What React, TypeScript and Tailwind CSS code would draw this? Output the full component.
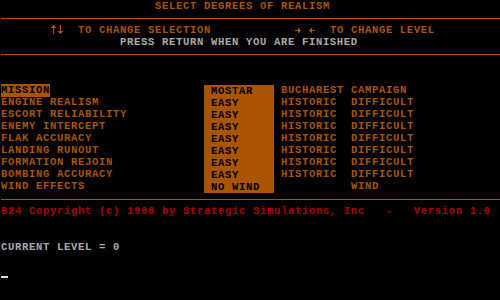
import React from "react";

const rows = [
  ["ENGINE REALISM", "EASY", "HISTORIC  DIFFICULT"],
  ["ESCORT RELIABILITY", "EASY", "HISTORIC  DIFFICULT"],
  ["ENEMY INTERCEPT", "EASY", "HISTORIC  DIFFICULT"],
  ["FLAK ACCURACY", "EASY", "HISTORIC  DIFFICULT"],
  ["LANDING RUNOUT", "EASY", "HISTORIC  DIFFICULT"],
  ["FORMATION REJOIN", "EASY", "HISTORIC  DIFFICULT"],
  ["BOMBING ACCURACY", "EASY", "HISTORIC  DIFFICULT"],
  ["WIND EFFECTS", "NO WIND", "          WIND"],
];

function Rule() {
  return (
    <div className="h-[12px] flex items-center">
      <div className="h-px w-full bg-[#a85400]" />
    </div>
  );
}

function Line({ children, className = "" }: { children?: React.ReactNode; className?: string }) {
  return <div className={"h-[12px] pt-px leading-[11px] whitespace-pre " + className}>{children}</div>;
}

// pixel arrows, one 7x12 cell each
const arrowRects: Record<string, number[][]> = {
  up: [[3, 0, 1, 9], [2, 1, 3, 1], [1, 2, 5, 1]],
  down: [[3, 0, 1, 9], [2, 7, 3, 1], [1, 6, 5, 1]],
  right: [[0, 5, 6, 1], [4, 4, 1, 3], [3, 3, 1, 5]],
  left: [[0, 5, 6, 1], [1, 4, 1, 3], [2, 3, 1, 5]],
};

function Arrow({ dir }: { dir: string }) {
  return (
    <svg width="7" height="11" viewBox="0 0 7 11" className="inline-block align-top" shapeRendering="crispEdges">
      {arrowRects[dir].map(([x, y, w, h], i) => (
        <rect key={i} x={x} y={y} width={w} height={h} fill="#a85400" />
      ))}
    </svg>
  );
}

export default function App() {
  return (
    <div
      className="w-[500px] h-[300px] bg-black text-[#a85400] font-bold text-[10.6px] tracking-[0.64px] overflow-hidden pl-px"
      style={{ fontFamily: '"Liberation Mono", "DejaVu Sans Mono", monospace' }}
    >
      <Line>{"                      SELECT DEGREES OF REALISM"}</Line>
      <Rule />
      <Line>
        {"       "}
        <Arrow dir="up" />
        <Arrow dir="down" />
        {"  TO CHANGE SELECTION            "}
        <Arrow dir="right" />
        {" "}
        <Arrow dir="left" />
        {"  TO CHANGE LEVEL"}
      </Line>
      <Line className="text-[#aaaaaa]">{"                 PRESS RETURN WHEN YOU ARE FINISHED"}</Line>
      <Rule />
      <Line />
      <Line />

      {/* options table */}
      <div className="flex">
        <div className="w-[203px]">
          <Line>
            <span className="bg-[#a85400] text-black border-b border-[#a85400]">MISSION</span>
          </Line>
          {rows.map((r) => (
            <Line key={r[0]}>{r[0]}</Line>
          ))}
        </div>
        <div className="w-[70px] bg-[#a85400] text-black pl-[7px] mt-px">
          <Line>MOSTAR</Line>
          {rows.map((r) => (
            <Line key={r[0]}>{r[1]}</Line>
          ))}
        </div>
        <div className="pl-[7px]">
          <Line>BUCHAREST CAMPAIGN</Line>
          {rows.map((r) => (
            <Line key={r[0]}>{r[2]}</Line>
          ))}
        </div>
      </div>

      <Rule />
      <Line className="text-[#aa0000]">
        {"B24 Copyright (c) 1988 by Strategic Simulations, Inc   -   Version 1.0"}
      </Line>
      <Line />
      <Line />
      <Line className="text-[#aaaaaa]">CURRENT LEVEL = 0</Line>
      <Line />
      <div className="h-[12px] flex items-end">
        <div className="w-[7px] h-[2px] bg-[#dddddd] mb-[-1px]" />
      </div>
    </div>
  );
}
